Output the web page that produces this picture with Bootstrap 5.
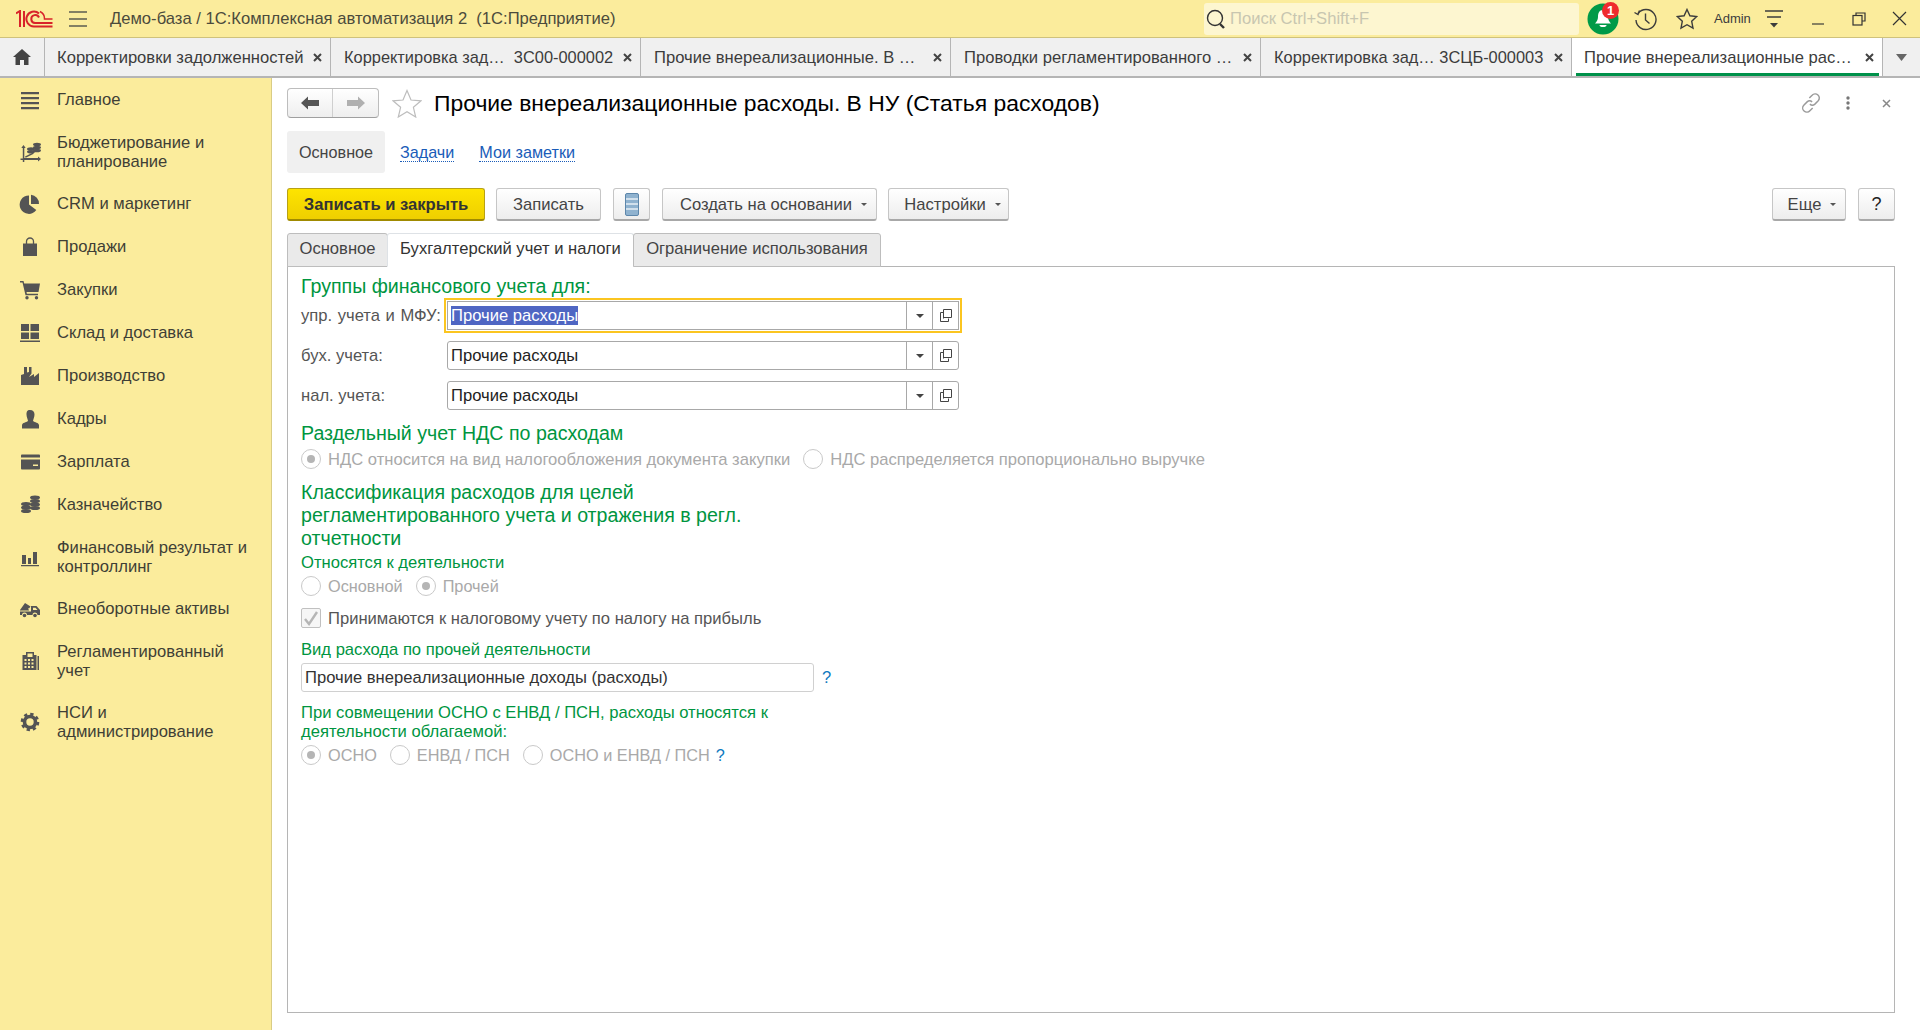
<!doctype html>
<html lang="ru">
<head>
<meta charset="utf-8">
<title>Прочие внереализационные расходы</title>
<link href="https://cdn.jsdelivr.net/npm/bootstrap@5.3.0/dist/css/bootstrap.min.css" rel="stylesheet">
<style>
html,body{height:100%;}
body{font-family:"Liberation Sans",Arial,sans-serif;font-size:16.6px;line-height:19px;color:#333;background:#fff;overflow:hidden;}
svg{display:block;flex:none;}
.topstrip{height:38px;background:#fbec9c;border-bottom:1px solid #cfc27c;flex:none;}
.brand-area{width:110px;padding-left:16px;gap:16px;}
.app-title{color:#4b4b3c;}
.search-box{width:375px;height:32px;background:#fdf6d0;border-radius:3px;margin-right:8px;padding-left:2px;color:#c8c6b0;gap:4px;}
.bell-wrap{width:32px;height:32px;margin-right:14px;}
.bell-badge{position:absolute;left:15px;top:-1px;width:17px;height:17px;border-radius:50%;background:#ef2b2d;color:#fff;font-weight:700;font-size:13px;line-height:17px;text-align:center;}
.admin-label{font-size:13px;color:#3c3c3c;width:38px;margin-right:13px;}
.hist-ico{margin-right:19px;}
.star-ico{margin-right:16px;}
.filter-ico{margin-right:29px;}
.tabstrip{height:40px;background:#f0f0f0;border-bottom:2px solid #b5b5b5;flex:none;}
.home-cell{width:45px;border-right:1px solid #b5b5b5;}
.wtab{height:38px;border-right:1px solid #b5b5b5;padding:0 8px 0 13px;color:#3c3c3c;white-space:nowrap;gap:4px;position:relative;}
.wtab-1{width:286px;padding-left:12px;}
.wtab-2,.wtab-3,.wtab-4{width:310px;}
.wtab-5{width:311px;}
.wtab-6{width:311px;background:#fff;padding-left:12px;}
.wtab-6::after{content:"";position:absolute;left:4px;right:3px;bottom:0;height:3px;background:#00914a;}
.wtab-text{flex:1 1 auto;overflow:hidden;}
.wtab-tight{font-size:16.4px;}
.more-cell{flex:1 1 auto;}
.workspace{flex:1 1 auto;min-height:0;}
.side-menu{width:272px;background:#fbec9c;border-right:1px solid #d9cc85;flex:none;padding-top:0;}
.side-item{padding:12px 12px 12px 17px;gap:14px;color:#3f3f36;}
.side-item.first{padding-top:12px;padding-bottom:11px;}
.side-item.shift-down{padding-top:13px;padding-bottom:11px;}
.side-item.short-end{padding-bottom:11px;}
.side-icon{width:26px;height:20px;flex:none;margin-block:-1px;}
.doc-area{flex:1 1 auto;min-width:0;padding:10px 25px 17px 15px;}
.head-row{height:30px;}
.nav-pair{width:92px;height:30px;border:1px solid #bdbdbd;border-bottom-color:#9f9f9f;border-radius:4px;background:linear-gradient(#fff,#eee);}
.nav-pair>div{flex:1 1 50%;}
.nav-pair>div:first-child{border-right:1px solid #cfcfcf;}
.star-big{margin-left:13px;}
.doc-title{font-size:22.9px;line-height:30px;color:#000;margin-left:12px;}
.sub-kebab{margin-left:25px;}
.sub-close{margin-left:32px;margin-right:4px;}
.subnav{margin-top:13px;height:42px;font-size:16.2px;}
.subnav-current{width:98px;height:42px;background:#f0f0f0;border-radius:3px;color:#444;}
.sublink{color:#1a5cb8;border-bottom:1px dotted #1a5cb8;line-height:18px;margin-left:15px;}
.sublink.second{margin-left:25px;}
.cmdbar{margin-top:15px;height:33px;}
.cmd-btn{height:33px;padding:0;font-size:16.6px;line-height:19px;color:#444;border:1px solid #c6c6c6;border-bottom:2px solid #a8a8a8;border-radius:3px;background:linear-gradient(#fff,#ededed);margin-right:12px;display:flex;align-items:center;justify-content:center;gap:9px;}
.cmd-btn:hover{color:#444;border-color:#c6c6c6;}
.cmd-main{width:198px;margin-right:11px;background:linear-gradient(#fde400,#efcf00);border-color:#b8a114;border-bottom-color:#a08a00;font-weight:700;color:#333;}
.cmd-main:hover{color:#333;border-color:#b8a114;}
.cmd-save{width:105px;}
.cmd-ico{width:37px;}
.cmd-create{width:215px;margin-right:11px;padding-left:8px;}
.cmd-set{width:121px;margin-right:0;padding-left:8px;}
.cmd-more{width:74px;padding-left:6px;}
.cmd-help{width:37px;margin-right:0;color:#222;font-size:18px;}
.caret-mini{width:0;height:0;border-left:3px solid transparent;border-right:3px solid transparent;border-top:3px solid #555;margin-top:1px;}
.form-tabs{margin-top:12px;border-bottom:0;height:33px;position:relative;z-index:1;}
.form-tabs .nav-link{height:34px;padding:5px 0 0 0;text-align:center;color:#444;background:#eaeaea;border:1px solid #bdbdbd;border-radius:3px 3px 0 0;margin:0;margin-right:-1px;line-height:19px;}
.form-tabs .nav-link.active{background:#fff;color:#333;border-bottom-color:#fff;}
.ftab-1{width:101px;}
.ftab-2{width:247px;}
.ftab-3{width:248px;}
.form-panel{flex:1 1 auto;border:1px solid #b5b5b5;padding:8px 0 0 13px;min-height:0;}
.group-head{font-size:19.6px;line-height:23px;color:#00953f;}
.group-sub{line-height:19px;color:#00953f;}
.field-row{height:29px;margin-top:11px;}
.field-row.first{margin-top:3px;}
.field-label{width:146px;flex:none;color:#555;white-space:nowrap;}
.field-label.wide-words{word-spacing:1px;}
.pick-field{width:512px;height:29px;border:1px solid #a8a8a8;border-radius:3px;color:#222;background:#fff;}
.pick-field.focused{outline:2px solid #fbc520;outline-offset:1px;border-radius:0;}
.pick-value{flex:1 1 auto;padding-left:3px;}
.pick-sel{background:#4f66c3;color:#fff;display:inline-block;height:19px;}
.pick-btn{width:26px;height:27px;border-left:1px solid #a8a8a8;}
.drop-tri{width:0;height:0;border-left:4px solid transparent;border-right:4px solid transparent;border-top:4px solid #444;}
.choice-row{height:20px;color:#a9a9a9;}
.choice-narrow{font-size:16.3px;}
.radio-ring{width:20px;height:20px;border:1px solid #c9c9c9;border-radius:50%;background:#fff;margin-right:7px;flex:none;display:flex;align-items:center;justify-content:center;}
.radio-ring.on::after{content:"";width:8px;height:8px;border-radius:50%;background:#b5b5b5;}
.check-box{width:20px;height:20px;border:1px solid #c0c0c0;border-radius:2px;margin-right:7px;flex:none;background:#f6f6f6;}
.check-text{color:#555;}
.plain-field{width:513px;height:29px;border:1px solid #d0d0d0;border-radius:3px;padding:0 3px;font-size:16.6px;line-height:19px;color:#333;background:#fff;}
.plain-field:disabled,.plain-field[readonly]{background:#fff;}
.hint-q{color:#0f7ac0;}
.mt-r1{margin-top:4px;}
.mt-r2{margin-top:12px;}
.mt-r3{margin-top:3px;}
.mt-r4{margin-top:11px;}
.mt-check{margin-top:12px;}
.mt-head2{margin-top:12px;}
.classify{max-width:480px;}
.tax-note{max-width:520px;}
.gap-r-1{margin-right:13px;}
.hint-near{margin-left:6px;}
</style>
</head>
<body class="d-flex flex-column">

<header class="topstrip d-flex align-items-center">
  <div class="brand-area d-flex align-items-center">
    <svg width="37" height="18" viewBox="0 0 37 18" fill="none" stroke="#d8232a" stroke-width="2">
      <path d="M0 3.5 L4 1 V17 M8 1 V17"/>
      <path d="M36.5 16.5H18a7.5 7.5 0 1 1 5-13"/>
      <path d="M36.5 13H19a4 4 0 1 1 4-5.5"/>
      <path d="M24 1.500a8 8 0 0 1 4.500 7.500h8" stroke-width="1.500"/>
    </svg>
    <svg width="18" height="16" viewBox="0 0 18 16"><path d="M0 1h18M0 8h18M0 15h18" stroke="#5c5c50" stroke-width="1.3"/></svg>
  </div>
  <div class="app-title">Демо-база / 1С:Комплексная автоматизация 2&nbsp; (1С:Предприятие)</div>
  <div class="ms-auto d-flex align-items-center">
    <div class="search-box d-flex align-items-center">
      <svg width="20" height="22" viewBox="0 0 20 22" fill="none" stroke="#333"><circle cx="9" cy="10" r="7.5" stroke-width="1.4"/><path d="M14 16l4 4" stroke-width="2.4"/></svg>
      <span>Поиск Ctrl+Shift+F</span>
    </div>
    <div class="bell-wrap position-relative">
      <svg width="32" height="32" viewBox="0 0 32 32"><circle cx="16" cy="16" r="15.5" fill="#009a48"/><path d="M16 7c-4 0-5 3.500-5 7 0 3-1.500 5-3 6.500h16c-1.500-1.500-3-3.500-3-6.500 0-3.500-1-7-5-7z" fill="#fff"/><path d="M12.500 22h7a3.500 2 0 0 1-7 0z" fill="#fff"/></svg>
      <div class="bell-badge">1</div>
    </div>
    <svg class="hist-ico" width="24" height="24" viewBox="0 0 24 24" fill="none" stroke="#3c3c3c" stroke-width="1.400"><path d="M5 6.500A10 10 0 1 1 3 13"/><path d="M1.500 5.500l3.500 2 1.500-4" /><path d="M12.500 6.500V13l4 3.500"/></svg>
    <svg class="star-ico" width="22" height="22" viewBox="0 0 22 22" fill="none" stroke="#3c3c3c" stroke-width="1.400"><path d="M11 1.500l2.900 6.300 6.800.8-5 4.700 1.300 6.800L11 16.700l-6 3.400 1.300-6.800-5-4.700 6.800-.8z"/></svg>
    <div class="admin-label">Admin</div>
    <svg class="filter-ico" width="18" height="20" viewBox="0 0 18 20"><path d="M0 2h18M2 8h14" stroke="#3c3c3c" stroke-width="1.300"/><path d="M5 14h8l-4 4.500z" fill="#3c3c3c"/></svg>
    <svg width="12" height="16" viewBox="0 0 12 16"><path d="M0 13h12" stroke="#4a4a40" stroke-width="1.300"/></svg>
    <svg width="14" height="14" viewBox="0 0 14 14" fill="none" stroke="#333" stroke-width="1.200" style="margin-left:28px"><path d="M4 3V1h9v8h-3"/><rect x="1" y="3.500" width="9" height="9.500"/></svg>
    <svg width="15" height="15" viewBox="0 0 15 15" stroke="#333" stroke-width="1.200" style="margin-left:26px;margin-right:13px"><path d="M1 1l13 13M14 1L1 14"/></svg>
  </div>
</header>

<nav class="tabstrip d-flex">
  <div class="home-cell d-flex align-items-center justify-content-center">
    <svg width="18" height="16" viewBox="0 0 18 16" fill="#444"><path d="M9 0L0 8h2.500v8h4.500v-5h4v5h4.500V8H18z"/></svg>
  </div>
  <div class="wtab wtab-1 d-flex align-items-center"><span class="wtab-text">Корректировки задолженностей</span><svg width="9" height="9" viewBox="0 0 9 9" stroke="#444" stroke-width="2"><path d="M1 1l7 7M8 1L1 8"/></svg></div>
  <div class="wtab wtab-2 d-flex align-items-center"><span class="wtab-text wtab-tight">Корректировка зад…&nbsp; 3С00-000002</span><svg width="9" height="9" viewBox="0 0 9 9" stroke="#444" stroke-width="2"><path d="M1 1l7 7M8 1L1 8"/></svg></div>
  <div class="wtab wtab-3 d-flex align-items-center"><span class="wtab-text">Прочие внереализационные. В …</span><svg width="9" height="9" viewBox="0 0 9 9" stroke="#444" stroke-width="2"><path d="M1 1l7 7M8 1L1 8"/></svg></div>
  <div class="wtab wtab-4 d-flex align-items-center"><span class="wtab-text">Проводки регламентированного …</span><svg width="9" height="9" viewBox="0 0 9 9" stroke="#444" stroke-width="2"><path d="M1 1l7 7M8 1L1 8"/></svg></div>
  <div class="wtab wtab-5 d-flex align-items-center"><span class="wtab-text wtab-tight">Корректировка зад… 3СЦБ-000003</span><svg width="9" height="9" viewBox="0 0 9 9" stroke="#444" stroke-width="2"><path d="M1 1l7 7M8 1L1 8"/></svg></div>
  <div class="wtab wtab-6 d-flex align-items-center"><span class="wtab-text">Прочие внереализационные рас…</span><svg width="9" height="9" viewBox="0 0 9 9" stroke="#444" stroke-width="2"><path d="M1 1l7 7M8 1L1 8"/></svg></div>
  <div class="more-cell d-flex align-items-center justify-content-center"><svg width="11" height="7" viewBox="0 0 11 7"><path d="M0 0h11L5.500 7z" fill="#666"/></svg></div>
</nav>

<div class="workspace d-flex">
  <aside class="side-menu">
    <div class="side-item first d-flex align-items-center"><svg class="side-icon" viewBox="0 0 26 20" fill="#545454"><path d="M4 2h18v2.200H4zM4 7h18v2.200H4zM4 12h18v2.200H4zM4 17h18v2.200H4z"/></svg><span>Главное</span></div>
    <div class="side-item shift-down d-flex align-items-center"><svg class="side-icon" viewBox="0 0 26 20" fill="#545454"><path d="M6.500 3l2.200 3H7.300v10H21v-1.400l3 2.400-3 2.400v-1.400H7.300v2H5.800v-2H3.500v-1.500h2.300V6H4.300z"/><path d="M8 14.500l8-4 .7 1.300-8 4z"/><ellipse cx="14" cy="7" rx="4" ry="1.800"/><ellipse cx="14" cy="9.800" rx="4" ry="1.800"/><ellipse cx="20" cy="2.500" rx="4" ry="1.800"/><ellipse cx="20" cy="5.500" rx="4" ry="1.800"/><ellipse cx="20" cy="8.500" rx="4" ry="1.800"/></svg><span>Бюджетирование и<br>планирование</span></div>
    <div class="side-item d-flex align-items-center"><svg class="side-icon" viewBox="0 0 26 20" fill="#545454"><path d="M12 1.500v9l7.300 5.600A9.200 9.200 0 1 1 12 1.500z"/><path d="M14 .8a9 9 0 0 1 8 9.200h-8z"/></svg><span>CRM и маркетинг</span></div>
    <div class="side-item d-flex align-items-center"><svg class="side-icon" viewBox="0 0 26 20" fill="#545454"><path d="M6 6.500h14V19H6z"/><path d="M9.500 8V4.500a3.500 3.500 0 0 1 7 0V8" fill="none" stroke="#545454" stroke-width="1.300"/></svg><span>Продажи</span></div>
    <div class="side-item d-flex align-items-center"><svg class="side-icon" viewBox="0 0 26 20" fill="#545454"><path d="M3 1h3.500l.7 2.500H23l-1.500 8.500H9.500l.4 1.800H21v1.400H8.500L5.500 2.400H3z"/><circle cx="10" cy="17.800" r="1.700"/><circle cx="19.500" cy="17.800" r="1.700"/></svg><span>Закупки</span></div>
    <div class="side-item d-flex align-items-center"><svg class="side-icon" viewBox="0 0 26 20" fill="#545454"><path d="M4 1h8v7H4zM13.500 1H22v7h-8.500zM4 9.500h8V16H4zM13.500 9.500H22V16h-8.500zM3 17.500h20V19H3z"/></svg><span>Склад и доставка</span></div>
    <div class="side-item d-flex align-items-center"><svg class="side-icon" viewBox="0 0 26 20" fill="#545454"><path d="M4 19V9l3-1V1h3v5.500l2-.5V1h2.500v6.500L12 11l5-3v3l5-4v12z"/></svg><span>Производство</span></div>
    <div class="side-item d-flex align-items-center"><svg class="side-icon" viewBox="0 0 26 20" fill="#545454"><path d="M13 1c3 0 4.500 2 4.500 4.500S16 11 16 12c2 1.500 5.500 1.500 6 4v3.500H5V16c.5-2.500 4-2.500 6-4 0-1-1.500-4-1.500-6.500S10 1 13 1z"/></svg><span>Кадры</span></div>
    <div class="side-item d-flex align-items-center"><svg class="side-icon" viewBox="0 0 26 20" fill="#545454"><path d="M4 3.500C4 3 4.500 2.500 5 2.500h17c.5 0 1 .5 1 1V5.500H4zM4 7.500h19v9c0 .5-.5 1-1 1H5c-.5 0-1-.5-1-1zM16 12.500v1.500h5v-1.500z" fill-rule="evenodd"/></svg><span>Зарплата</span></div>
    <div class="side-item d-flex align-items-center"><svg class="side-icon" viewBox="0 0 26 20" fill="#545454"><ellipse cx="18" cy="2.500" rx="5" ry="2"/><ellipse cx="18" cy="6" rx="5" ry="2"/><ellipse cx="18" cy="9.500" rx="5" ry="2"/><ellipse cx="18" cy="13" rx="5" ry="2"/><ellipse cx="9" cy="9" rx="5" ry="2"/><ellipse cx="9" cy="12.500" rx="5" ry="2"/><ellipse cx="9" cy="16" rx="5" ry="2"/></svg><span>Казначейство</span></div>
    <div class="side-item short-end d-flex align-items-center"><svg class="side-icon" viewBox="0 0 26 20" fill="#545454"><path d="M5 8h4v9H5zM11 11h3v6h-3zM16 5h4v12h-4zM4 18h18v1.300H4z"/></svg><span>Финансовый результат и<br>контроллинг</span></div>
    <div class="side-item d-flex align-items-center"><svg class="side-icon" viewBox="0 0 26 20" fill="#545454"><path d="M3 11l5-7 5.500 3.500-1.500 2-1-.5 1 2.500H3z"/><path d="M14 7h5.500l3.500 4v5h-2.500a2.500 2.500 0 0 0-5 0H10a2.500 2.500 0 0 0-5 0H3v-3.500h11zM16 8.800V11h4.500l-2-2.200z" fill-rule="evenodd"/><circle cx="7.500" cy="16.500" r="1.800"/><circle cx="18" cy="16.500" r="1.800"/></svg><span>Внеоборотные активы</span></div>
    <div class="side-item short-end d-flex align-items-center"><svg class="side-icon" viewBox="0 0 26 20" fill="#545454"><path d="M9 1h8v3h2.500v15h-14V4H9zM10.500 2.500V6h5V2.500zM7.500 8v2h2V8zm3.500 0v2h2V8zm3.500 0v2h2V8zm-7 3.500v2h2v-2zm3.500 0v2h2v-2zm3.500 0v2h2v-2zm-7 3.500v2h2v-2zm3.500 0v2h2v-2zm3.500 0v2h2v-2z" fill-rule="evenodd"/><path d="M20.500 5H22v14h-1.500z"/></svg><span>Регламентированный<br>учет</span></div>
    <div class="side-item d-flex align-items-center"><svg class="side-icon" viewBox="0 0 26 20" fill="none" stroke="#545454"><circle cx="13" cy="10" r="5.500" stroke-width="3.600"/><circle cx="13" cy="10" r="8" stroke-width="2.600" stroke-dasharray="3.280 3"/></svg><span>НСИ и<br>администрирование</span></div>
  </aside>

  <main class="doc-area d-flex flex-column">
    <div class="head-row d-flex align-items-center">
      <div class="nav-pair d-flex">
        <div class="d-flex align-items-center justify-content-center"><svg width="18" height="14" viewBox="0 0 18 14" fill="#555"><path d="M0 7l7-6.500V4h11v6H7v3.500z"/></svg></div>
        <div class="d-flex align-items-center justify-content-center"><svg width="18" height="14" viewBox="0 0 18 14" fill="#b0b0b0"><path d="M18 7l-7-6.500V4H0v6h11v3.500z"/></svg></div>
      </div>
      <svg class="star-big" width="30" height="29" viewBox="0 0 30 29" fill="#fff" stroke="#bdbdbd" stroke-width="1.200"><path d="M15 1.500l4 9.500 10 .8-7.600 6.500 2.300 9.700-8.700-5.200-8.700 5.200 2.300-9.700L1 11.800l10-.8z"/></svg>
      <div class="doc-title">Прочие внереализационные расходы. В НУ (Статья расходов)</div>
      <div class="ms-auto d-flex align-items-center">
        <svg width="20" height="20" viewBox="0 0 18 18" fill="none" stroke="#9a9a9a" stroke-width="1.300"><path d="M7.500 4.500l2.500-2.500a3.300 3.300 0 0 1 5.500 5l-3 3a3.300 3.300 0 0 1-4.500 0"/><path d="M10.500 13.500L8 16a3.300 3.300 0 0 1-5.500-5l3-3a3.300 3.300 0 0 1 4.500 0"/></svg>
        <svg class="sub-kebab" width="4" height="14" viewBox="0 0 4 14" fill="#777"><circle cx="2" cy="2" r="1.700"/><circle cx="2" cy="7" r="1.700"/><circle cx="2" cy="12" r="1.700"/></svg>
        <svg class="sub-close" width="9" height="9" viewBox="0 0 9 9" stroke="#888" stroke-width="1.500"><path d="M1 1l7 7M8 1L1 8"/></svg>
      </div>
    </div>

    <div class="subnav d-flex align-items-center">
      <div class="subnav-current d-flex align-items-center justify-content-center">Основное</div>
      <a class="sublink text-decoration-none" href="#">Задачи</a>
      <a class="sublink second text-decoration-none" href="#">Мои заметки</a>
    </div>

    <div class="cmdbar d-flex">
      <button class="btn cmd-btn cmd-main" type="button">Записать и закрыть</button>
      <button class="btn cmd-btn cmd-save" type="button">Записать</button>
      <button class="btn cmd-btn cmd-ico" type="button"><svg width="14" height="23" viewBox="0 0 14 23"><rect x=".5" y=".5" width="13" height="22" rx="1.500" fill="#8fb2cf" stroke="#5d87ab"/><path d="M1 6h12M1 11h12M1 16h12" stroke="#e8f0f6" stroke-width="1.500"/></svg></button>
      <button class="btn cmd-btn cmd-create" type="button">Создать на основании <span class="caret-mini"></span></button>
      <button class="btn cmd-btn cmd-set" type="button">Настройки <span class="caret-mini"></span></button>
      <button class="btn cmd-btn cmd-more ms-auto" type="button">Еще <span class="caret-mini"></span></button>
      <button class="btn cmd-btn cmd-help" type="button">?</button>
    </div>

    <ul class="nav nav-tabs form-tabs">
      <li class="nav-item"><a class="nav-link ftab-1" href="#">Основное</a></li>
      <li class="nav-item"><a class="nav-link active ftab-2" href="#">Бухгалтерский учет и налоги</a></li>
      <li class="nav-item"><a class="nav-link ftab-3" href="#">Ограничение использования</a></li>
    </ul>

    <section class="form-panel">
      <div class="group-head">Группы финансового учета для:</div>
      <div class="field-row first d-flex align-items-center">
        <div class="field-label wide-words">упр. учета и МФУ:</div>
        <div class="pick-field focused d-flex align-items-center">
          <div class="pick-value"><span class="pick-sel">Прочие расходы</span></div>
          <div class="pick-btn d-flex align-items-center justify-content-center"><span class="drop-tri"></span></div>
          <div class="pick-btn d-flex align-items-center justify-content-center"><svg width="12" height="13" viewBox="0 0 12 13" fill="none" stroke="#444"><path d="M3.500 9.500V.5h8v8h-8M3.500 3.500H.5v9h8v-3"/></svg></div>
        </div>
      </div>
      <div class="field-row d-flex align-items-center">
        <div class="field-label">бух. учета:</div>
        <div class="pick-field d-flex align-items-center">
          <div class="pick-value">Прочие расходы</div>
          <div class="pick-btn d-flex align-items-center justify-content-center"><span class="drop-tri"></span></div>
          <div class="pick-btn d-flex align-items-center justify-content-center"><svg width="12" height="13" viewBox="0 0 12 13" fill="none" stroke="#444"><path d="M3.500 9.500V.5h8v8h-8M3.500 3.500H.5v9h8v-3"/></svg></div>
        </div>
      </div>
      <div class="field-row d-flex align-items-center">
        <div class="field-label">нал. учета:</div>
        <div class="pick-field d-flex align-items-center">
          <div class="pick-value">Прочие расходы</div>
          <div class="pick-btn d-flex align-items-center justify-content-center"><span class="drop-tri"></span></div>
          <div class="pick-btn d-flex align-items-center justify-content-center"><svg width="12" height="13" viewBox="0 0 12 13" fill="none" stroke="#444"><path d="M3.500 9.500V.5h8v8h-8M3.500 3.500H.5v9h8v-3"/></svg></div>
        </div>
      </div>

      <div class="group-head mt-head2">Раздельный учет НДС по расходам</div>
      <div class="choice-row d-flex align-items-center mt-r1">
        <span class="radio-ring on"></span><span class="gap-r-1">НДС относится на вид налогообложения документа закупки</span>
        <span class="radio-ring"></span><span>НДС распределяется пропорционально выручке</span>
      </div>

      <div class="group-head classify mt-r2">Классификация расходов для целей регламентированного учета и отражения в регл. отчетности</div>
      <div class="group-sub mt-r3">Относятся к деятельности</div>
      <div class="choice-row choice-narrow d-flex align-items-center mt-r1">
        <span class="radio-ring"></span><span class="gap-r-1">Основной</span>
        <span class="radio-ring on"></span><span>Прочей</span>
      </div>
      <div class="choice-row d-flex align-items-center mt-check">
        <span class="check-box d-flex align-items-center justify-content-center"><svg width="16" height="15" viewBox="0 0 16 15" fill="none" stroke="#b5b5b5" stroke-width="2.400"><path d="M2 8l4 5 8-12"/></svg></span><span class="check-text">Принимаются к налоговому учету по налогу на прибыль</span>
      </div>
      <div class="group-sub mt-check">Вид расхода по прочей деятельности</div>
      <div class="d-flex align-items-center mt-r1">
        <input class="form-control plain-field" type="text" readonly value="Прочие внереализационные доходы (расходы)">
        <span class="hint-q ms-2">?</span>
      </div>
      <div class="group-sub tax-note mt-r4">При совмещении ОСНО с ЕНВД / ПСН, расходы относятся к деятельности облагаемой:</div>
      <div class="choice-row choice-narrow d-flex align-items-center mt-r1">
        <span class="radio-ring on"></span><span class="gap-r-1">ОСНО</span>
        <span class="radio-ring"></span><span class="gap-r-1">ЕНВД / ПСН</span>
        <span class="radio-ring"></span><span>ОСНО и ЕНВД / ПСН</span>
        <span class="hint-q hint-near">?</span>
      </div>
    </section>
  </main>
</div>

<script src="https://cdn.jsdelivr.net/npm/bootstrap@5.3.0/dist/js/bootstrap.bundle.min.js"></script>
</body>
</html>
